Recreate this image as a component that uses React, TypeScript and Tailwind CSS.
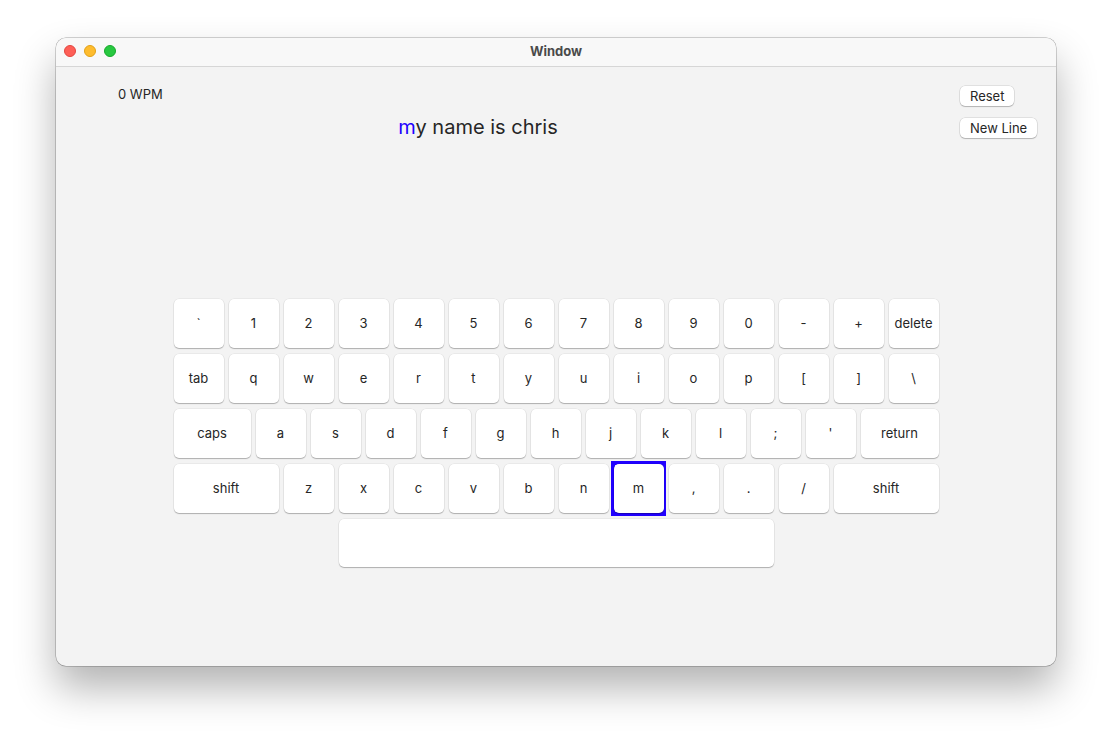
const rows: { label: string; w: number; active?: boolean }[][] = [
  [
    { label: '`', w: 50 },
    ...'1234567890-+'.split('').map((c) => ({ label: c, w: 50 })),
    { label: 'delete', w: 50 },
  ],
  [
    { label: 'tab', w: 50 },
    ...'qwertyuiop[]\\'.split('').map((c) => ({ label: c, w: 50 })),
  ],
  [
    { label: 'caps', w: 77 },
    ...("asdfghjkl;'").split('').map((c) => ({ label: c, w: 50 })),
    { label: 'return', w: 78 },
  ],
  [
    { label: 'shift', w: 105 },
    ...'zxcvbnm,./'.split('').map((c) => ({ label: c, w: 50, active: c === 'm' })),
    { label: 'shift', w: 105 },
  ],
];

function Key({ label, w, active }: { label: string; w: number; active?: boolean }) {
  return (
    <div className="relative shrink-0" style={{ width: w }}>
      {active && <div className="absolute -left-[3px] -top-[3px] -right-[2px] -bottom-[3px] border-[4px] border-[#2000ff]" />}
      <div className="relative h-[49px] rounded-[5px] bg-white shadow-[0_0_0_0.5px_rgba(0,0,0,0.08),0_1px_1px_rgba(0,0,0,0.25)] flex items-center justify-center text-[13px] text-[#262626]">
        {label}
      </div>
    </div>
  );
}

function MacButton({ children }: { children: React.ReactNode }) {
  return (
    <button className="h-[20px] px-[10px] rounded-[5px] bg-white text-[13px] leading-none text-[#262626] shadow-[0_0_0_0.5px_rgba(0,0,0,0.15),0_1px_1px_rgba(0,0,0,0.2)]">
      {children}
    </button>
  );
}

export default function App() {
  return (
    <div className="w-[1112px] h-[740px] bg-white pl-[56px] pt-[38px] font-['Inter','Liberation_Sans',sans-serif]">
      <div className="w-[1000px] h-[628px] rounded-[10px] overflow-hidden bg-[#f3f3f3] shadow-[0_0_0_0.5px_rgba(0,0,0,0.35),0_22px_40px_rgba(0,0,0,0.3)] flex flex-col">
        {/* Title bar */}
        <div className="relative h-[29px] shrink-0 bg-[#f8f8f8] border-b border-[#d6d6d6] flex items-center justify-center">
          <div className="absolute left-[8px] top-[7px] flex gap-[8px]">
            <span className="w-[12px] h-[12px] rounded-full bg-[#fe5f57] border border-[#e2463f]" />
            <span className="w-[12px] h-[12px] rounded-full bg-[#febc2e] border border-[#e1a116]" />
            <span className="w-[12px] h-[12px] rounded-full bg-[#28c840] border border-[#17a92c]" />
          </div>
          <span className="text-[13px] font-bold text-[#4a4a4a]">Window</span>
        </div>

        {/* Content */}
        <div className="flex-1 flex flex-col">
          <div className="flex pt-[19px]">
            <div className="w-[844px] flex flex-col">
              <div className="pl-[62px] text-[13px] leading-[16px] text-[#262626]">0 WPM</div>
              <div className="mt-[13px] text-center text-[20px] leading-[24px] text-[#262626]">
                <span className="text-[#2000ff]">m</span>y name is chris
              </div>
            </div>
            <div className="ml-[60px] flex flex-col items-start gap-[12px]">
              <MacButton>Reset</MacButton>
              <MacButton>New Line</MacButton>
            </div>
          </div>

          <div className="mt-[160px] flex flex-col items-center gap-[6px]">
            {rows.map((row, i) => (
              <div key={i} className="flex gap-[5px]">
                {row.map((k, j) => (
                  <Key key={j} {...k} />
                ))}
              </div>
            ))}
            <div className="h-[48px] w-[435px] rounded-[5px] bg-white shadow-[0_0_0_0.5px_rgba(0,0,0,0.08),0_1px_1px_rgba(0,0,0,0.25)]" />
          </div>
        </div>
      </div>
    </div>
  );
}
